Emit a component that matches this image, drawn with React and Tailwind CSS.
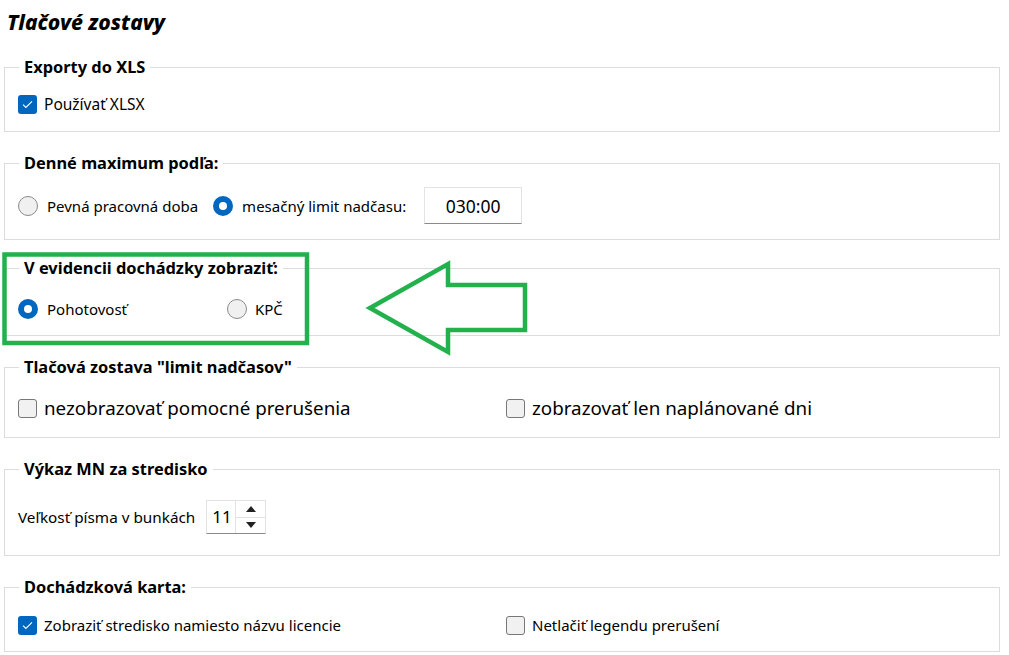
import React from "react";

const font = { fontFamily: '"Noto Sans", "DejaVu Sans", sans-serif' };

const Check = ({ checked }) =>
  checked ? (
    <span className="w-[19px] h-[19px] rounded-[3px] bg-[#0067c0] flex items-center justify-center shrink-0">
      <svg width="11" height="9" viewBox="0 0 11 9" fill="none">
        <path d="M1 4.6 L3.9 7.5 L10 1.4" stroke="white" strokeWidth="1.1" />
      </svg>
    </span>
  ) : (
    <span className="w-[19px] h-[19px] rounded-[3px] bg-[#f1f1f1] border border-[#777] shrink-0" />
  );

const Radio = ({ checked }) =>
  checked ? (
    <span className="w-[20px] h-[20px] rounded-full bg-[#0067c0] flex items-center justify-center shrink-0">
      <span className="w-[8px] h-[8px] rounded-full bg-white" />
    </span>
  ) : (
    <span className="w-[20px] h-[20px] rounded-full bg-[#f0f0f0] border border-[#8a8a8a] shrink-0" />
  );

const Box = ({ title, className, children }) => (
  <fieldset className={"border border-[#dcdcdc] pl-[13px] pr-[14px] " + className}>
    <legend className="px-[5px] ml-[1px] text-[16.4px] leading-[20px] font-bold text-black">{title}</legend>
    {children}
  </fieldset>
);

export default function App() {
  return (
    <div className="relative w-[1009px] h-[655px] bg-white text-black overflow-hidden" style={font}>
      <div className="pl-[4px] w-[1000px]">
        <h1 className="h-[57px] pl-[3px] pt-[8px] text-[21px] leading-[28px] font-extrabold italic">Tlačové zostavy</h1>

        <Box title="Exporty do XLS" className="h-[75px]">
          <div className="flex items-center gap-[7px] pt-[17px] text-[15.5px] leading-[20px]">
            <Check checked />
            <span>Používať XLSX</span>
          </div>
        </Box>

        <Box title="Denné maximum podľa:" className="h-[87px] mt-[21px]">
          <div className="flex items-center pt-[14px] text-[15px] leading-[20px]">
            <Radio />
            <span className="ml-[9px]">Pevná pracovná doba</span>
            <span className="ml-[15px]"><Radio checked /></span>
            <span className="ml-[9px]">mesačný limit nadčasu:</span>
            <span className="ml-[18px] w-[98px] h-[37px] border border-[#e3e3e3] border-b-[#8a8a8a] flex items-center justify-center text-[17.5px]">030:00</span>
          </div>
        </Box>

        <Box title="V evidencii dochádzky zobraziť:" className="h-[78px] mt-[18px]">
          <div className="flex items-center pt-[21px] text-[15px] leading-[20px]">
            <Radio checked />
            <span className="ml-[9px] w-[180px]">Pohotovosť</span>
            <Radio />
            <span className="ml-[8px]">KPČ</span>
          </div>
        </Box>

        <Box title={'Tlačová zostava "limit nadčasov"'} className="h-[81px] mt-[21px]">
          <div className="flex items-center pt-[20px] text-[18.8px] leading-[22px]">
            <div className="flex items-center gap-[7px] w-[488px]">
              <Check />
              <span>nezobrazovať pomocné prerušenia</span>
            </div>
            <div className="flex items-center gap-[7px]">
              <Check />
              <span>zobrazovať len naplánované dni</span>
            </div>
          </div>
        </Box>

        <Box title="Výkaz MN za stredisko" className="h-[97px] mt-[21px]">
          <div className="flex items-center pt-[21px] text-[15.3px] leading-[20px]">
            <span>Veľkosť písma v bunkách</span>
            <div className="ml-[11px] flex h-[34px] border border-[#e3e3e3] border-b-[#8a8a8a]">
              <span className="w-[28px] flex items-center pl-[5px] text-[17px]">11</span>
              <div className="w-[30px] flex flex-col border-l border-[#e3e3e3]">
                <span className="flex-1 flex items-center justify-center border-b border-[#e3e3e3]">
                  <svg width="10" height="6" viewBox="0 0 10 6"><path d="M5 0 L10 6 L0 6 Z" fill="#222" /></svg>
                </span>
                <span className="flex-1 flex items-center justify-center">
                  <svg width="10" height="6" viewBox="0 0 10 6"><path d="M0 0 L10 0 L5 6 Z" fill="#222" /></svg>
                </span>
              </div>
            </div>
          </div>
        </Box>

        <Box title="Dochádzková karta:" className="h-[75px] mt-[21px]">
          <div className="flex items-center pt-[18px] text-[15px] leading-[20px]">
            <div className="flex items-center gap-[7px] w-[488px]">
              <Check checked />
              <span>Zobraziť stredisko namiesto názvu licencie</span>
            </div>
            <div className="flex items-center gap-[7px]">
              <Check />
              <span>Netlačiť legendu prerušení</span>
            </div>
          </div>
        </Box>
      </div>

      <svg className="absolute left-0 top-0 pointer-events-none" width="1009" height="655" viewBox="0 0 1009 655" fill="none">
        <rect x="4.5" y="254.5" width="302.5" height="88.5" stroke="#22b14c" strokeWidth="4.5" />
        <polygon
          points="370,308 448,264 448,285 525,285 525,330 448,330 448,352"
          stroke="#22b14c"
          strokeWidth="4.5"
          strokeLinejoin="miter"
        />
      </svg>
    </div>
  );
}
